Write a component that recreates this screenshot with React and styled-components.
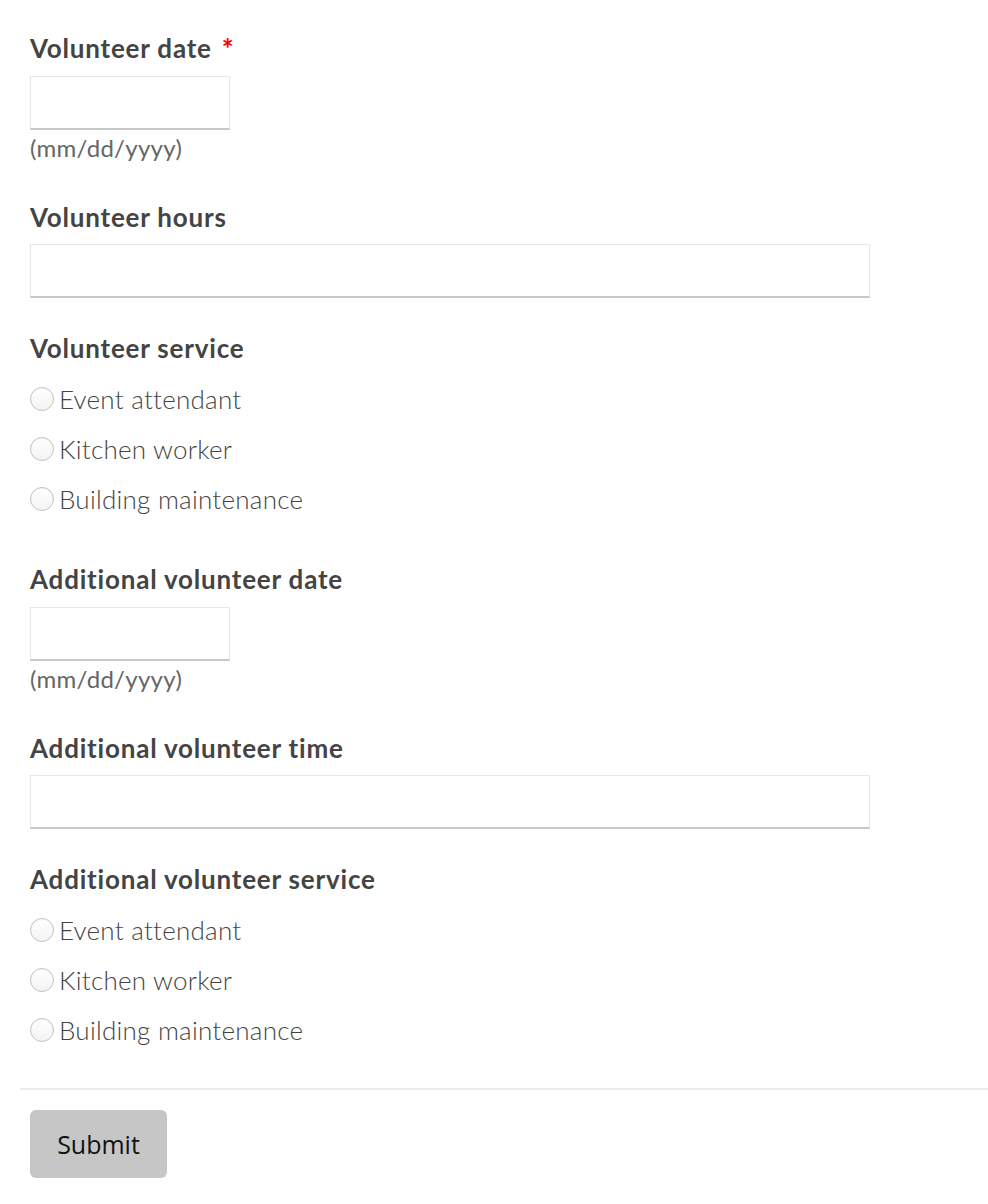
import React from "react";
import styled, { createGlobalStyle } from "styled-components";

const Global = createGlobalStyle`
  html, body { margin: 0; padding: 0; background: #fff; }
  body { font-family: Lato, "Open Sans", sans-serif; color: #444; }
  * { box-sizing: border-box; }
`;

const Page = styled.form`
  padding: 32px 0 26px 20px;
`;

const Field = styled.div`
  padding: 0 10px;
  margin-bottom: ${(p) => p.$gap}px;
`;

const Label = styled.div`
  font-size: 26px;
  line-height: 30px;
  font-weight: 700;
  letter-spacing: 0.8px;
  color: #444;
  margin-bottom: ${(p) => p.$gap ?? 13}px;
`;

const Required = styled.span`
  color: #f00;
  margin-left: 10px;
  font-size: 28px;
  position: relative;
  top: 1px;
`;

const Input = styled.div`
  width: ${(p) => (p.$wide ? 840 : 200)}px;
  height: 54px;
  border: 1px solid #e6e6e6;
  border-bottom: 2px solid #c8c8c8;
  background: #fff;
`;

const Hint = styled.div`
  font-size: 24px;
  line-height: 30px;
  letter-spacing: 0.3px;
  color: #666;
  margin-top: 3px;
`;

const RadioRow = styled.label`
  display: flex;
  align-items: center;
  height: 50px;
  font-size: 26px;
  font-weight: 300;
  letter-spacing: 0.25px;
  color: #444;
`;

const RadioDot = styled.span`
  width: 24px;
  height: 24px;
  border-radius: 50%;
  border: 1px solid #c2c2c2;
  background: linear-gradient(#ffffff, #f3f3f3);
  box-shadow: inset 0 1px 1px rgba(0, 0, 0, 0.04);
  margin-right: 5px;
  flex: none;
`;

const Rule = styled.hr`
  border: 0;
  border-top: 2px solid #ececec;
  margin: 0 0 20px 0;
`;

const Actions = styled.div`
  padding: 0 10px;
`;

const Button = styled.button`
  width: 137px;
  height: 68px;
  background: #c6c6c6;
  border: 0;
  border-radius: 6px;
  font-family: "Open Sans", sans-serif;
  font-size: 25px;
  color: #111;
`;

const services = ["Event attendant", "Kitchen worker", "Building maintenance"];

function RadioGroup() {
  return services.map((s) => (
    <RadioRow key={s}>
      <RadioDot />
      {s}
    </RadioRow>
  ));
}

export default function App() {
  return (
    <>
      <Global />
      <Page onSubmit={(e) => e.preventDefault()}>
        <Field $gap={39}>
          <Label>
            Volunteer date<Required>*</Required>
          </Label>
          <Input />
          <Hint>(mm/dd/yyyy)</Hint>
        </Field>
        <Field $gap={35}>
          <Label $gap={12}>Volunteer hours</Label>
          <Input $wide />
        </Field>
        <Field $gap={40}>
          <Label $gap={11}>Volunteer service</Label>
          <RadioGroup />
        </Field>
        <Field $gap={39}>
          <Label>Additional volunteer date</Label>
          <Input />
          <Hint>(mm/dd/yyyy)</Hint>
        </Field>
        <Field $gap={35}>
          <Label $gap={12}>Additional volunteer time</Label>
          <Input $wide />
        </Field>
        <Field $gap={33}>
          <Label $gap={11}>Additional volunteer service</Label>
          <RadioGroup />
        </Field>
        <Rule />
        <Actions>
          <Button type="submit">Submit</Button>
        </Actions>
      </Page>
    </>
  );
}
